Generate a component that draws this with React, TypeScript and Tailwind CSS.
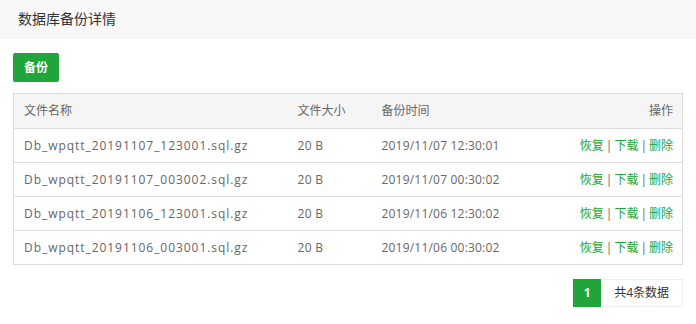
import React from 'react';

const rows = [
  { name: 'Db_wpqtt_20191107_123001.sql.gz', size: '20 B', time: '2019/11/07 12:30:01' },
  { name: 'Db_wpqtt_20191107_003002.sql.gz', size: '20 B', time: '2019/11/07 00:30:02' },
  { name: 'Db_wpqtt_20191106_123001.sql.gz', size: '20 B', time: '2019/11/06 12:30:02' },
  { name: 'Db_wpqtt_20191106_003001.sql.gz', size: '20 B', time: '2019/11/06 00:30:02' },
];

export default function App() {
  return (
    <div
      className="w-[696px] h-[324px] bg-white text-[#666] overflow-hidden"
      style={{ fontFamily: '"Open Sans", "Noto Sans CJK SC", sans-serif' }}
    >
      {/* 标题栏 */}
      <div className="h-[38px] bg-[#f8f8f8] border-b border-[#eee] pl-[18px] flex items-center text-[14px] text-[#333]">
        数据库备份详情
      </div>

      <div className="px-[13px] pt-[15px]">
        <button className="h-[29px] px-[11px] rounded-[2px] bg-[#20a53a] text-white text-[12px] font-bold">
          备份
        </button>

        <table className="mt-[11px] w-full table-fixed border border-[#ddd] border-collapse text-[12px]">
          <thead>
            <tr className="h-[35px] bg-[#f5f5f5] border-b border-[#ddd]">
              <th className="text-left font-normal pl-[10px] w-[284px]">文件名称</th>
              <th className="text-left font-normal w-[84px]">文件大小</th>
              <th className="text-left font-normal w-[160px]">备份时间</th>
              <th className="text-right font-normal pr-[9px]">操作</th>
            </tr>
          </thead>
          <tbody>
            {rows.map((r) => (
              <tr key={r.name} className="h-[34px] border-b border-[#ddd]">
                <td className="pl-[10px] tracking-[0.95px]">{r.name}</td>
                <td className="tracking-[0.3px]">{r.size}</td>
                <td className="tracking-[0.2px]">{r.time}</td>
                <td className="text-right pr-[9px] text-[#20a53a]">
                  恢复<span className="text-[#666] mx-[2px]">|</span>下载<span className="text-[#666] mx-[2px]">|</span>删除
                </td>
              </tr>
            ))}
          </tbody>
        </table>

        <div className="flex justify-end mt-[14px] text-[12px]">
          <span className="w-[28px] h-[28px] bg-[#20a53a] text-white font-bold flex items-center justify-center">1</span>
          <span className="h-[28px] px-[13px] border border-[#eee] border-l-0 text-[#333] flex items-center">共4条数据</span>
        </div>
      </div>
    </div>
  );
}
